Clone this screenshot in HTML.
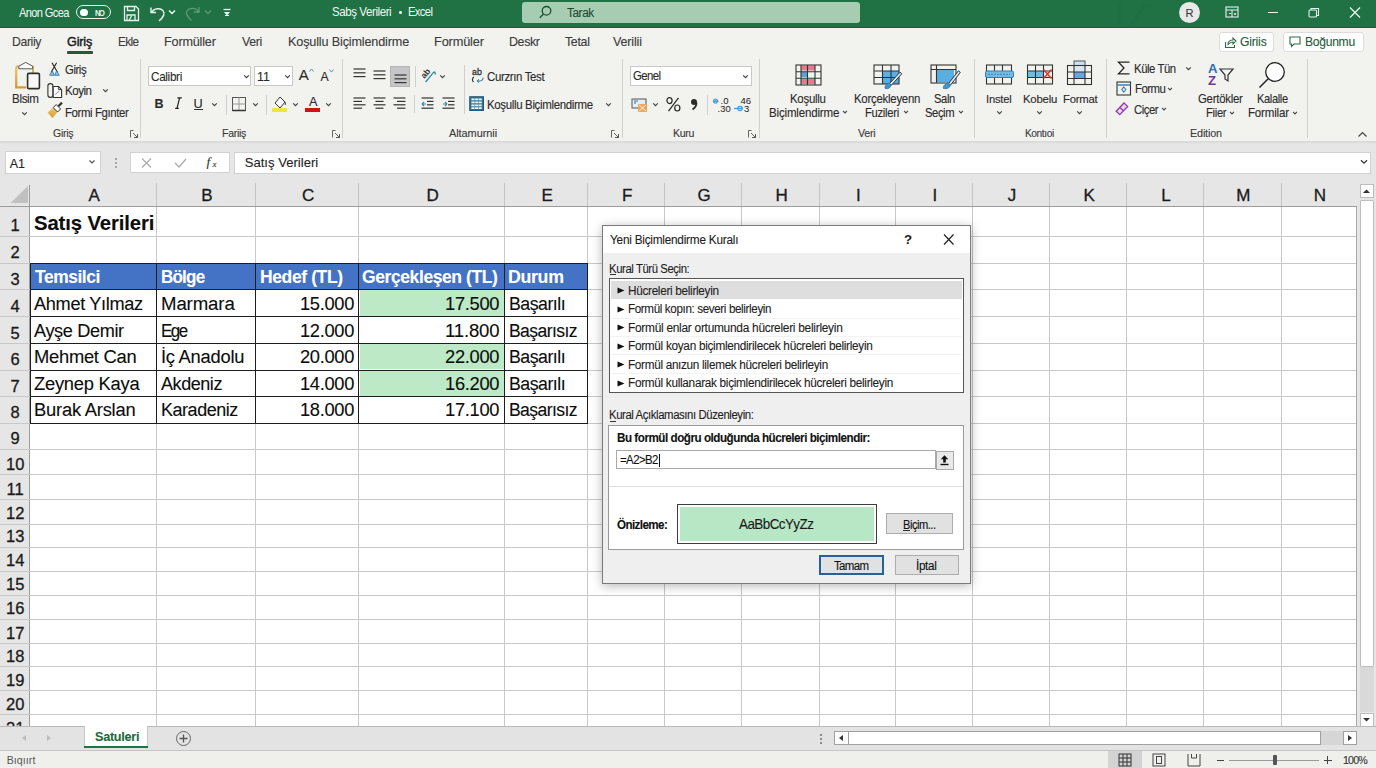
<!DOCTYPE html>
<html><head><meta charset="utf-8">
<style>
*{margin:0;padding:0;box-sizing:border-box}
html,body{width:1376px;height:768px;overflow:hidden;background:#fff;font-family:"Liberation Sans",sans-serif;color:#262626;position:relative}
.a{position:absolute}
.t{position:absolute;white-space:nowrap;line-height:1;-webkit-text-stroke:0.12px currentColor}
.ns{-webkit-text-stroke:0}
svg{overflow:visible}
</style></head><body>
<div class="a" style="left:0;top:0;width:1376px;height:28px;background:#207245"></div>
<div class="a" style="left:0;top:27px;width:1376px;height:1px;background:#1a5f39"></div>
<div class="t ns" style="left:19.2px;top:7.0px;font-size:12.2px;letter-spacing:-0.69px;transform:scaleX(0.910);transform-origin:0 0;color:#f4f8f5;">Anon Gcea</div>
<div class="a" style="left:76px;top:5px;width:35px;height:14px;border:1.3px solid #e9f2ec;border-radius:8px"></div>
<div class="a" style="left:80px;top:8.5px;width:7.5px;height:7.5px;border-radius:50%;background:#fff"></div>
<div class="t ns" style="left:95.0px;top:9.0px;font-size:8.5px;font-weight:700;letter-spacing:-1.49px;transform:scaleX(0.884);transform-origin:0 0;color:#eaf3ed;">NO</div>
<svg class="a" style="left:122px;top:4px" width="19" height="19" viewBox="0 0 19 19" fill="none" stroke="#e8f1eb" stroke-width="1.3">
<path d="M2.5 2.5h11.5l2.5 2.5v11.5h-14z"/><path d="M5.5 2.5v4h7v-4"/><path d="M5 16.5v-5.5h8v5.5"/><path d="M7 16.5l2.5-4.5"/></svg>
<svg class="a" style="left:148px;top:4px" width="20" height="19" viewBox="0 0 20 19" fill="none" stroke="#eef5f0" stroke-width="1.4">
<path d="M3 3.5v5h5"/><path d="M3.5 8.5C6 4 13 3.5 15.5 7.5c2 3.2-0.5 6-4.5 9.5"/></svg>
<svg class="a" style="left:168px;top:9px" width="8" height="6" viewBox="0 0 8 6"><path d="M1 1.5L4 4.5L7 1.5" fill="none" stroke="#eef5f0" stroke-width="1.5"/></svg>
<svg class="a" style="left:183px;top:4px" width="20" height="19" viewBox="0 0 20 19" fill="none" stroke="#5e9c78" stroke-width="1.3">
<path d="M16 3v5h-5"/><path d="M16 8C13.5 3.5 6.5 3 4 7c-2 3.2 0.5 6 4.5 9.5"/></svg>
<svg class="a" style="left:204px;top:9px" width="8" height="6" viewBox="0 0 8 6"><path d="M1 1.5L4 4.5L7 1.5" fill="none" stroke="#5e9c78" stroke-width="1.2"/></svg>
<svg class="a" style="left:222px;top:8px" width="10" height="10" viewBox="0 0 10 10"><path d="M1.5 1.5h7" stroke="#eef5f0" stroke-width="1.3"/><path d="M2 4h6l-3 3.5z" fill="#eef5f0"/><path d="M3 7.5h4" stroke="#eef5f0" stroke-width="1"/></svg>
<div class="t ns" style="left:332.0px;top:6.0px;font-size:12.5px;letter-spacing:-0.46px;transform:scaleX(0.922);transform-origin:0 0;color:#f2f7f3;">Sabş Verileri</div>
<div class="a" style="left:399px;top:11px;width:2.5px;height:2.5px;border-radius:50%;background:#e6efe9"></div>
<div class="t ns" style="left:408.0px;top:6.0px;font-size:12.5px;letter-spacing:-0.74px;transform:scaleX(0.904);transform-origin:0 0;color:#f2f7f3;">Excel</div>
<div class="a" style="left:522px;top:1.5px;width:338px;height:21.5px;background:#a6ccb2;border-radius:3px"></div>
<svg class="a" style="left:537px;top:4px" width="16" height="16" viewBox="0 0 16 16" fill="none" stroke="#1e4d33" stroke-width="1.3"><circle cx="9.5" cy="6.8" r="4.3"/><path d="M6.5 10L2.8 13.8"/></svg>
<div class="t " style="left:566.6px;top:7.0px;font-size:12.5px;letter-spacing:-0.44px;transform:scaleX(0.943);transform-origin:0 0;color:#1d4a31;">Tarak</div>
<div class="a" style="left:1117px;top:2px;width:4px;height:23px;background:#1d6a40;opacity:.35"></div>
<svg class="a" style="left:1130px;top:2px" width="30" height="24"><path d="M2 23L14 4h10" fill="none" stroke="#1d6a40" stroke-width="3" opacity=".35"/></svg>
<div class="a" style="left:1179px;top:2px;width:21px;height:21px;border-radius:50%;background:#e9e9e9"></div>
<div class="t " style="left:1185.5px;top:8.0px;font-size:11.1px;color:#3a3a3a;">R</div>
<svg class="a" style="left:1225px;top:6px" width="14" height="12" viewBox="0 0 14 12" fill="none" stroke="#e8f1eb" stroke-width="1.1"><rect x="1" y="1" width="12" height="10"/><path d="M1 4h12M7 4v7M4 7.5h2M9 7.5l1 1l1-1"/></svg>
<div class="a" style="left:1268px;top:12px;width:10px;height:1.2px;background:#eef5f0"></div>
<svg class="a" style="left:1308px;top:7px" width="12" height="11" viewBox="0 0 12 11" fill="none" stroke="#e8f1eb" stroke-width="1.1"><rect x="1" y="3" width="7.5" height="7" rx="1"/><path d="M3 3V1.5h7.5v7H8.5"/></svg>
<svg class="a" style="left:1349px;top:7px" width="12" height="11" viewBox="0 0 12 11" fill="none" stroke="#eef5f0" stroke-width="1.2"><path d="M1 0.5l10 10M11 0.5l-10 10"/></svg>
<div class="a" style="left:0;top:28px;width:1376px;height:113px;background:#f2f2ef"></div>
<div class="t " style="left:11.9px;top:35.0px;font-size:13.0px;letter-spacing:-0.39px;transform:scaleX(0.941);transform-origin:0 0;color:#3b3b3b;">Dariiy</div>
<div class="t " style="left:67.0px;top:35.0px;font-size:13.0px;letter-spacing:-0.19px;transform:scaleX(0.972);transform-origin:0 0;color:#1b1b1b;-webkit-text-stroke:0.45px #1b1b1b;">Giriş</div>
<div class="t " style="left:117.7px;top:35.0px;font-size:13.0px;letter-spacing:-0.73px;transform:scaleX(0.913);transform-origin:0 0;color:#3b3b3b;">Ekle</div>
<div class="t " style="left:164.4px;top:35.0px;font-size:13.0px;letter-spacing:-0.19px;transform:scaleX(0.972);transform-origin:0 0;color:#3b3b3b;">Formüller</div>
<div class="t " style="left:241.9px;top:35.0px;font-size:13.0px;letter-spacing:-0.36px;transform:scaleX(0.952);transform-origin:0 0;color:#3b3b3b;">Veri</div>
<div class="t " style="left:287.7px;top:35.0px;font-size:13.0px;letter-spacing:-0.17px;transform:scaleX(0.974);transform-origin:0 0;color:#3b3b3b;">Koşullu Biçimlendirme</div>
<div class="t " style="left:434.0px;top:35.0px;font-size:13.0px;letter-spacing:-0.15px;transform:scaleX(0.980);transform-origin:0 0;color:#3b3b3b;">Formüler</div>
<div class="t " style="left:509.3px;top:35.0px;font-size:13.0px;letter-spacing:-0.38px;transform:scaleX(0.955);transform-origin:0 0;color:#3b3b3b;">Deskr</div>
<div class="t " style="left:564.5px;top:35.0px;font-size:13.0px;letter-spacing:-0.33px;transform:scaleX(0.952);transform-origin:0 0;color:#3b3b3b;">Tetal</div>
<div class="t " style="left:613.4px;top:35.0px;font-size:13.0px;letter-spacing:-0.18px;transform:scaleX(0.966);transform-origin:0 0;color:#3b3b3b;">Verilii</div>
<div class="a" style="left:66.8px;top:51px;width:26px;height:2.6px;background:#1c5c36;border-radius:1px"></div>
<div class="a" style="left:1218.7px;top:31.8px;width:55.5px;height:20px;background:#fff;border:1px solid #dcdcdc;border-radius:3px"></div>
<svg class="a" style="left:1224px;top:36px" width="13" height="13" viewBox="0 0 13 13" fill="none" stroke="#2c6a45" stroke-width="1.1"><path d="M1.5 6v5.5h9V9"/><path d="M4 8.5c0-3 2-4.5 5-4.5V2l3 3l-3 3V6c-2 0-3.5 .8-5 2.5z"/></svg>
<div class="t " style="left:1240.0px;top:36.0px;font-size:12.5px;letter-spacing:-0.18px;transform:scaleX(0.968);transform-origin:0 0;color:#285c3d;">Giriis</div>
<div class="a" style="left:1283px;top:31.8px;width:81px;height:20px;background:#fff;border:1px solid #dcdcdc;border-radius:3px"></div>
<svg class="a" style="left:1289px;top:36px" width="12" height="12" viewBox="0 0 12 12" fill="none" stroke="#2c6a45" stroke-width="1.1"><path d="M1 1h10v7H5l-2.5 2.5V8H1z"/></svg>
<div class="t " style="left:1305.3px;top:36.0px;font-size:12.5px;letter-spacing:-0.29px;transform:scaleX(0.968);transform-origin:0 0;color:#285c3d;">Boğunmu</div>
<svg class="a" style="left:8px;top:58px" width="60" height="62" viewBox="8 58 60 62">
<defs><linearGradient id="gold" x1="0" y1="0" x2="0" y2="1"><stop offset="0" stop-color="#f2c766"/><stop offset="1" stop-color="#d49a35"/></linearGradient></defs>
<path d="M16.2 66.5V87.4H26" fill="none" stroke="url(#gold)" stroke-width="2.3"/>
<path d="M16.2 66.5H19M30 66.5H33V73" fill="none" stroke="#dcae55" stroke-width="2"/>
<path d="M18.8 68.8V66.2L25.8 62.4L32.6 66.2V68.8z" fill="#fbfbfb" stroke="#5a5a5a" stroke-width="1"/>
<rect x="27.6" y="73.4" width="11.8" height="15.2" rx="1.2" fill="#f8f8f8" stroke="#2e2e2e" stroke-width="1.6"/>
<path d="M52 62.8L57.6 72.6M56.6 62.8L51 72.6" stroke="#222" stroke-width="1.1"/>
<path d="M49.7 75.3L52.3 70.8L54.3 75.3z" fill="#8cc2e6" stroke="#3b7db0" stroke-width=".9"/>
<path d="M54.7 75.3L56.7 70.8L59.3 75.3z" fill="#8cc2e6" stroke="#3b7db0" stroke-width=".9"/>
<rect x="47.9" y="83.6" width="5" height="13.8" rx="2.3" fill="none" stroke="#333" stroke-width="1.1"/>
<path d="M53.2 86.5H58.6L61.6 89.6V97.5H53.2z" fill="#fafafa" stroke="#333" stroke-width="1.1"/>
<path d="M58.6 86.5V89.6H61.6" fill="none" stroke="#333" stroke-width=".9"/>
<path d="M55.2 94.5L59.5 91" stroke="#777" stroke-width=".8"/>
<path d="M47.6 112.6L53.2 107.6L57.6 112L52.4 117.9z" fill="url(#gold)"/>
<path d="M53.2 107.6L56.2 104.6L60.6 109L57.6 112z" fill="#fff" stroke="#333" stroke-width="1"/>
<path d="M58.4 106.2L62 102.6" stroke="#333" stroke-width="2.2"/>
</svg>
<div class="t " style="left:11.7px;top:93.0px;font-size:12.2px;letter-spacing:-0.36px;transform:scaleX(0.952);transform-origin:0 0;color:#2b2b2b;">Blsim</div>
<svg class="a" style="left:21.1px;top:109.5px" width="7" height="7" viewBox="0 0 7 7"><path d="M1.2 2.3L3.5 4.6L5.8 2.3" fill="none" stroke="#444" stroke-width="1.2"/></svg>
<div class="t " style="left:64.5px;top:64.0px;font-size:12.3px;letter-spacing:-0.47px;transform:scaleX(0.926);transform-origin:0 0;color:#2b2b2b;">Giriş</div>
<div class="t " style="left:65.0px;top:85.0px;font-size:12.3px;letter-spacing:-0.49px;transform:scaleX(0.936);transform-origin:0 0;color:#2b2b2b;">Koyin</div>
<svg class="a" style="left:101.5px;top:87.0px" width="7" height="7" viewBox="0 0 7 7"><path d="M1.2 2.3L3.5 4.6L5.8 2.3" fill="none" stroke="#444" stroke-width="1.2"/></svg>
<div class="t " style="left:64.5px;top:107.0px;font-size:12.3px;letter-spacing:-0.43px;transform:scaleX(0.931);transform-origin:0 0;color:#2b2b2b;">Formi Fgınter</div>
<div class="t " style="left:52.8px;top:128.0px;font-size:11.1px;letter-spacing:-0.30px;transform:scaleX(0.948);transform-origin:0 0;color:#3a3a3a;">Giriş</div>
<svg class="a" style="left:130px;top:130px" width="8" height="8" viewBox="0 0 8 8" fill="none" stroke="#555" stroke-width="0.9"><path d="M0.5 7.5V0.5h3M7.5 4.5v3h-3"/><path d="M3 3l4.5 4.5M4 7.5h3.5V4"/></svg>
<div class="a" style="left:140px;top:59px;width:1px;height:79px;background:#cfcfcf"></div>
<div class="a" style="left:148.2px;top:66.2px;width:103.3px;height:20.1px;background:#fff;border:1px solid #c9c9c9"></div>
<div class="t " style="left:151.2px;top:71.0px;font-size:12.4px;letter-spacing:-0.33px;transform:scaleX(0.944);transform-origin:0 0;color:#2b2b2b;">Calibri</div>
<svg class="a" style="left:243.1px;top:73.1px" width="7" height="7" viewBox="0 0 7 7"><path d="M1.2 2.3L3.5 4.6L5.8 2.3" fill="none" stroke="#444" stroke-width="1.2"/></svg>
<div class="a" style="left:253.6px;top:66.2px;width:39.9px;height:20.1px;background:#fff;border:1px solid #c9c9c9"></div>
<div class="t " style="left:257.0px;top:71.0px;font-size:12.4px;color:#2b2b2b;">11</div>
<svg class="a" style="left:284.3px;top:73.1px" width="7" height="7" viewBox="0 0 7 7"><path d="M1.2 2.3L3.5 4.6L5.8 2.3" fill="none" stroke="#444" stroke-width="1.2"/></svg>
<div class="t " style="left:298.7px;top:67.0px;font-size:15px;color:#2b2b2b;">A</div>
<svg class="a" style="left:309px;top:68px" width="5" height="4" viewBox="0 0 5 4"><path d="M0.5 3.5L2.5 1L4.5 3.5" fill="none" stroke="#4a8fc6" stroke-width="1"/></svg>
<div class="t " style="left:320.6px;top:71.0px;font-size:12.2px;color:#2b2b2b;">A</div>
<svg class="a" style="left:329px;top:69px" width="5" height="4" viewBox="0 0 5 4"><path d="M0.5 0.5L2.5 3L4.5 0.5" fill="none" stroke="#4a8fc6" stroke-width="1"/></svg>
<div class="t " style="left:154.4px;top:98.0px;font-size:12.5px;font-weight:700;color:#2b2b2b;">B</div>
<svg class="a" style="left:173px;top:96px" width="12" height="14" viewBox="173 96 12 14"><path d="M177.4 97.9h4.4M175.2 108.3h3.6M179.6 97.9L177 108.3" fill="none" stroke="#222" stroke-width="1.2"/></svg>
<div class="t " style="left:193.6px;top:98.0px;font-size:12.7px;color:#2b2b2b;">U</div>
<div class="a" style="left:193.5px;top:109.3px;width:9.5px;height:1px;background:#333"></div>
<svg class="a" style="left:211.0px;top:100.7px" width="7" height="7" viewBox="0 0 7 7"><path d="M1.2 2.3L3.5 4.6L5.8 2.3" fill="none" stroke="#444" stroke-width="1.2"/></svg>
<div class="a" style="left:225.7px;top:94.5px;width:1px;height:20.099999999999994px;background:#cfcfcf"></div>
<svg class="a" style="left:231px;top:96px" width="16" height="16" viewBox="0 0 16 16" fill="none" stroke="#555" stroke-width="1">
<rect x="1.5" y="1.5" width="13" height="13"/><path d="M8 1.5v13M1.5 8h13" stroke="#999"/><path d="M1.5 14.5h13" stroke="#333" stroke-width="1.5"/></svg>
<svg class="a" style="left:252.0px;top:100.7px" width="7" height="7" viewBox="0 0 7 7"><path d="M1.2 2.3L3.5 4.6L5.8 2.3" fill="none" stroke="#444" stroke-width="1.2"/></svg>
<div class="a" style="left:266.4px;top:94.5px;width:1px;height:20.099999999999994px;background:#cfcfcf"></div>
<svg class="a" style="left:271px;top:95px" width="17" height="18" viewBox="0 0 17 18">
<path d="M4 8l5-6l5 5l-5 6z" fill="#fafafa" stroke="#333" stroke-width="1"/><path d="M13 6c1.5 1.5 2 3 1 4" fill="none" stroke="#333" stroke-width="1"/>
<rect x="1" y="13" width="15" height="4" fill="#efe83a"/></svg>
<svg class="a" style="left:291.8px;top:100.7px" width="7" height="7" viewBox="0 0 7 7"><path d="M1.2 2.3L3.5 4.6L5.8 2.3" fill="none" stroke="#444" stroke-width="1.2"/></svg>
<div class="t " style="left:309.0px;top:96.0px;font-size:12.7px;color:#2b2b2b;">A</div>
<div class="a" style="left:305px;top:108px;width:15.3px;height:3.7px;background:#d1101a"></div>
<svg class="a" style="left:325.0px;top:100.7px" width="7" height="7" viewBox="0 0 7 7"><path d="M1.2 2.3L3.5 4.6L5.8 2.3" fill="none" stroke="#444" stroke-width="1.2"/></svg>
<div class="t " style="left:221.7px;top:128.0px;font-size:11.1px;letter-spacing:-0.29px;transform:scaleX(0.947);transform-origin:0 0;color:#3a3a3a;">Fariiş</div>
<svg class="a" style="left:331.5px;top:130px" width="8" height="8" viewBox="0 0 8 8" fill="none" stroke="#555" stroke-width="0.9"><path d="M0.5 7.5V0.5h3M7.5 4.5v3h-3"/><path d="M3 3l4.5 4.5M4 7.5h3.5V4"/></svg>
<div class="a" style="left:342px;top:59px;width:1px;height:79px;background:#cfcfcf"></div>
<svg class="a" style="left:353px;top:67.5px" width="16" height="14" viewBox="0 0 16 14"><path d="M0.5 1.0H12.5" stroke="#333" stroke-width="1.2"/><path d="M0.5 4.8H12.5" stroke="#333" stroke-width="1.2"/><path d="M0.5 8.6H12.5" stroke="#333" stroke-width="1.2"/></svg>
<svg class="a" style="left:373px;top:70px" width="16" height="14" viewBox="0 0 16 14"><path d="M0.5 1.0H12.5" stroke="#333" stroke-width="1.2"/><path d="M0.5 4.8H12.5" stroke="#333" stroke-width="1.2"/><path d="M0.5 8.6H12.5" stroke="#333" stroke-width="1.2"/></svg>
<div class="a" style="left:390px;top:66.3px;width:20px;height:20.3px;background:#c6c6c6;border:1px solid #b5b5b5"></div>
<svg class="a" style="left:394px;top:74px" width="16" height="14" viewBox="0 0 16 14"><path d="M0.5 1.0H12.5" stroke="#333" stroke-width="1.2"/><path d="M0.5 4.8H12.5" stroke="#333" stroke-width="1.2"/><path d="M0.5 8.6H12.5" stroke="#333" stroke-width="1.2"/></svg>
<div class="a" style="left:414.5px;top:66px;width:1px;height:21px;background:#cfcfcf"></div>
<svg class="a" style="left:415px;top:62px" width="25" height="25" viewBox="415 62 25 25">
<text x="0" y="0" font-size="8.5" font-weight="700" font-family="Liberation Sans" fill="#333" transform="translate(424.5 79) rotate(-50)">ab</text>
<path d="M425.6 82L433.3 72.6Q435.6 70.8 435.2 74.6" fill="none" stroke="#2e8a9e" stroke-width="1.3"/></svg>
<svg class="a" style="left:438.5px;top:72.7px" width="7" height="7" viewBox="0 0 7 7"><path d="M1.2 2.3L3.5 4.6L5.8 2.3" fill="none" stroke="#444" stroke-width="1.2"/></svg>
<div class="a" style="left:463.6px;top:65px;width:1px;height:49px;background:#cfcfcf"></div>
<svg class="a" style="left:468px;top:64px" width="20" height="22" viewBox="468 64 20 22">
<text x="472" y="75.3" font-size="8.8" font-family="Liberation Sans" fill="#333" stroke="#333" stroke-width=".3">ab</text>
<path d="M473.8 77C472.2 78.5 471.8 80.5 473.5 82" fill="none" stroke="#333" stroke-width="1.1"/>
<path d="M483 77.6C483.5 80 481 81.5 477.5 81" fill="none" stroke="#2e7fa8" stroke-width="1.1"/><path d="M478.8 79.2L477 81L479 82.6" fill="none" stroke="#2e7fa8" stroke-width="1"/></svg>
<div class="t " style="left:487.4px;top:71.0px;font-size:12.2px;letter-spacing:-0.37px;transform:scaleX(0.938);transform-origin:0 0;color:#2b2b2b;">Curzrın Test</div>
<svg class="a" style="left:353px;top:97px" width="16" height="14" viewBox="0 0 16 14"><path d="M0.5 1.0H12.5" stroke="#333" stroke-width="1.2"/><path d="M0.5 4.4H9" stroke="#333" stroke-width="1.2"/><path d="M0.5 7.8H12.5" stroke="#333" stroke-width="1.2"/><path d="M0.5 11.2H9" stroke="#333" stroke-width="1.2"/></svg>
<svg class="a" style="left:373px;top:97px" width="16" height="14" viewBox="0 0 16 14"><path d="M0.5 1.0H12.5" stroke="#333" stroke-width="1.2"/><path d="M2.5 4.4H10.5" stroke="#333" stroke-width="1.2"/><path d="M0.5 7.8H12.5" stroke="#333" stroke-width="1.2"/><path d="M2.5 11.2H10.5" stroke="#333" stroke-width="1.2"/></svg>
<svg class="a" style="left:393px;top:97px" width="16" height="14" viewBox="0 0 16 14"><path d="M0.5 1.0H12.5" stroke="#333" stroke-width="1.2"/><path d="M4 4.4H12.5" stroke="#333" stroke-width="1.2"/><path d="M0.5 7.8H12.5" stroke="#333" stroke-width="1.2"/><path d="M4 11.2H12.5" stroke="#333" stroke-width="1.2"/></svg>
<div class="a" style="left:414px;top:95px;width:1px;height:18px;background:#cfcfcf"></div>
<svg class="a" style="left:421px;top:97px" width="16" height="14" viewBox="0 0 16 14"><path d="M0.5 1.0H12.5" stroke="#333" stroke-width="1.2"/><path d="M6 4.4H12.5" stroke="#333" stroke-width="1.2"/><path d="M6 7.8H12.5" stroke="#333" stroke-width="1.2"/><path d="M0.5 11.2H12.5" stroke="#333" stroke-width="1.2"/></svg>
<svg class="a" style="left:421px;top:101px" width="6" height="6"><path d="M5 3H1M1 3l2-2M1 3l2 2" fill="none" stroke="#2f8fb0" stroke-width="1.2"/></svg>
<svg class="a" style="left:442px;top:97px" width="16" height="14" viewBox="0 0 16 14"><path d="M0.5 1.0H12.5" stroke="#333" stroke-width="1.2"/><path d="M6 4.4H12.5" stroke="#333" stroke-width="1.2"/><path d="M6 7.8H12.5" stroke="#333" stroke-width="1.2"/><path d="M0.5 11.2H12.5" stroke="#333" stroke-width="1.2"/></svg>
<svg class="a" style="left:442px;top:101px" width="6" height="6"><path d="M1 3h4M5 3L3 1M5 3L3 5" fill="none" stroke="#2f8fb0" stroke-width="1.2"/></svg>
<svg class="a" style="left:469px;top:96px" width="15" height="15" viewBox="0 0 15 15">
<rect x="0.8" y="0.8" width="13.6" height="13.6" fill="#3a7898" stroke="#24597a" stroke-width="1.2"/>
<path d="M2.4 3.4h10.4M2.4 6.4h10.4M2.4 9.4h10.4M2.4 12.1h10.4" stroke="#e6f3f9" stroke-width="1.7" stroke-dasharray="3.2 .5"/></svg>
<div class="t " style="left:487.4px;top:99.0px;font-size:12.2px;letter-spacing:-0.36px;transform:scaleX(0.941);transform-origin:0 0;color:#2b2b2b;">Koşullu Biçimlendirme</div>
<svg class="a" style="left:604.5px;top:101.1px" width="7" height="7" viewBox="0 0 7 7"><path d="M1.2 2.3L3.5 4.6L5.8 2.3" fill="none" stroke="#444" stroke-width="1.2"/></svg>
<div class="t " style="left:449.3px;top:128.0px;font-size:11.1px;letter-spacing:-0.07px;transform:scaleX(0.987);transform-origin:0 0;color:#3a3a3a;">Altamurnii</div>
<svg class="a" style="left:611px;top:130px" width="8" height="8" viewBox="0 0 8 8" fill="none" stroke="#555" stroke-width="0.9"><path d="M0.5 7.5V0.5h3M7.5 4.5v3h-3"/><path d="M3 3l4.5 4.5M4 7.5h3.5V4"/></svg>
<div class="a" style="left:622px;top:59px;width:1px;height:79px;background:#cfcfcf"></div>
<div class="a" style="left:630px;top:66.1px;width:121.6px;height:20.4px;background:#fff;border:1px solid #c9c9c9"></div>
<div class="t " style="left:633.0px;top:70.0px;font-size:12.4px;letter-spacing:-0.66px;transform:scaleX(0.920);transform-origin:0 0;color:#2b2b2b;">Genel</div>
<svg class="a" style="left:742.3px;top:72.5px" width="7" height="7" viewBox="0 0 7 7"><path d="M1.2 2.3L3.5 4.6L5.8 2.3" fill="none" stroke="#444" stroke-width="1.2"/></svg>
<svg class="a" style="left:631px;top:98px" width="18" height="15" viewBox="0 0 18 15">
<rect x="1" y="1" width="14" height="9" fill="#e6eef5" stroke="#555" stroke-width="1"/><path d="M3 3h4M3 5h2" stroke="#2f6f9f"/>
<rect x="7" y="6" width="9" height="8" fill="#f0a050" opacity=".9"/><path d="M8 7l7 6M15 7l-7 6" stroke="#fff" stroke-width=".8"/></svg>
<svg class="a" style="left:652.2px;top:101.0px" width="7" height="7" viewBox="0 0 7 7"><path d="M1.2 2.3L3.5 4.6L5.8 2.3" fill="none" stroke="#444" stroke-width="1.2"/></svg>
<svg class="a" style="left:666px;top:97px" width="15" height="15" viewBox="0 0 15 15" fill="none" stroke="#262626" stroke-width="1.2"><ellipse cx="3.5" cy="3.6" rx="2.6" ry="3"/><ellipse cx="11.3" cy="11" rx="2.6" ry="3"/><path d="M12.5 0.8L2.5 14.2"/></svg>
<svg class="a" style="left:689px;top:98px" width="10" height="13" viewBox="0 0 10 13"><circle cx="5" cy="4" r="3" fill="#2b2b2b"/><path d="M7.5 4.5c0 3-1.5 5.5-4 7" fill="none" stroke="#2b2b2b" stroke-width="1.8"/></svg>
<div class="a" style="left:707.4px;top:95px;width:1px;height:20px;background:#cfcfcf"></div>
<svg class="a" style="left:712px;top:96px" width="18" height="17" viewBox="0 0 18 17">
<text x="8.5" y="8.3" font-size="9.5" font-family="Liberation Sans" fill="#222">.0</text><text x="5.5" y="15.8" font-size="9.5" font-family="Liberation Sans" fill="#222">.30</text>
<path d="M1.5 5.2h5" stroke="#4a9ad6" stroke-width="1.6"/><circle cx="3.5" cy="5.2" r="2" fill="none" stroke="#4a9ad6" stroke-width="1.2"/></svg>
<svg class="a" style="left:733px;top:96px" width="18" height="17" viewBox="0 0 18 17">
<text x="7.5" y="8.3" font-size="9.5" font-family="Liberation Sans" fill="#222">46</text><text x="11" y="15.8" font-size="9.5" font-family="Liberation Sans" fill="#222">3</text>
<path d="M1 12.5h9" stroke="#4a9ad6" stroke-width="1.3"/><circle cx="7" cy="12.5" r="2.2" fill="none" stroke="#4a9ad6" stroke-width="1.2"/></svg>
<div class="t " style="left:672.6px;top:128.0px;font-size:11.1px;letter-spacing:-0.34px;transform:scaleX(0.956);transform-origin:0 0;color:#3a3a3a;">Kuru</div>
<svg class="a" style="left:748px;top:130px" width="8" height="8" viewBox="0 0 8 8" fill="none" stroke="#555" stroke-width="0.9"><path d="M0.5 7.5V0.5h3M7.5 4.5v3h-3"/><path d="M3 3l4.5 4.5M4 7.5h3.5V4"/></svg>
<div class="a" style="left:759.2px;top:59px;width:1px;height:79px;background:#cfcfcf"></div>
<svg class="a" style="left:795px;top:64px" width="27" height="22" viewBox="0 0 27 22"><rect x="6" y="1.5" width="14" height="5" fill="#e47a8c"/><rect x="6" y="15" width="14" height="5" fill="#e47a8c"/><rect x="6" y="8" width="6" height="5" fill="#5d9fd6"/><g fill="none" stroke="#333" stroke-width="1.1"><rect x="1" y="1" width="25" height="20"/><path d="M1 7.7h25M1 14.3h25M6 1v20M12.5 1v20M20 1v20"/></g></svg>
<div class="t " style="left:790.0px;top:94.0px;font-size:11.9px;letter-spacing:-0.26px;transform:scaleX(0.961);transform-origin:0 0;color:#2b2b2b;">Koşullu</div>
<div class="t " style="left:769.0px;top:108.0px;font-size:11.9px;letter-spacing:-0.18px;transform:scaleX(0.971);transform-origin:0 0;color:#2b2b2b;">Biçimlendirme</div>
<svg class="a" style="left:842.3px;top:109.3px" width="6" height="6" viewBox="0 0 7 7"><path d="M1.2 2.3L3.5 4.6L5.8 2.3" fill="none" stroke="#444" stroke-width="1.2"/></svg>
<svg class="a" style="left:873px;top:64px" width="30" height="25" viewBox="0 0 30 25"><rect x="10" y="7" width="16" height="13" fill="#5aaee0"/><g fill="none" stroke="#333" stroke-width="1.1"><rect x="1" y="1" width="25" height="19"/><path d="M1 7h25M1 13.5h25M9.5 1v19M18 1v19"/></g><path d="M16.5 19.5L27 8.2l1.8 1.6L18.4 21.2z" fill="#d7ebf7" stroke="#333" stroke-width="1"/><path d="M12.2 24.5c-.8-1.6.6-4.6 3.8-5.6l2.2 2c-.8 3-2.5 4.2-6 3.6z" fill="#3d95d0" stroke="#2a6f9e" stroke-width=".7"/></svg>
<div class="t " style="left:853.7px;top:94.0px;font-size:11.9px;letter-spacing:-0.26px;transform:scaleX(0.960);transform-origin:0 0;color:#2b2b2b;">Korçekleyenn</div>
<div class="t " style="left:865.4px;top:108.0px;font-size:11.9px;letter-spacing:-0.31px;transform:scaleX(0.944);transform-origin:0 0;color:#2b2b2b;">Fuzileri</div>
<svg class="a" style="left:903.3px;top:109.3px" width="6" height="6" viewBox="0 0 7 7"><path d="M1.2 2.3L3.5 4.6L5.8 2.3" fill="none" stroke="#444" stroke-width="1.2"/></svg>
<svg class="a" style="left:930px;top:64px" width="31" height="25" viewBox="0 0 31 25"><rect x="7" y="6" width="17" height="12" fill="#5aaee0"/><g fill="none" stroke="#333" stroke-width="1.1"><rect x="1" y="1" width="25" height="18"/><path d="M1 5.5h25M6.5 1v18"/></g><path d="M18.5 19.5L28.5 6.8l1.8 1.6L20.4 21.2z" fill="#d7ebf7" stroke="#333" stroke-width="1"/><path d="M13.5 24.5c-.8-1.6.6-4.6 4.8-5.6l2.2 2c-.8 3-3 4.2-7 3.6z" fill="#3d95d0" stroke="#2a6f9e" stroke-width=".7"/></svg>
<div class="t " style="left:933.6px;top:94.0px;font-size:11.9px;letter-spacing:-0.45px;transform:scaleX(0.944);transform-origin:0 0;color:#2b2b2b;">Saln</div>
<div class="t " style="left:924.7px;top:108.0px;font-size:11.9px;letter-spacing:-0.45px;transform:scaleX(0.946);transform-origin:0 0;color:#2b2b2b;">Seçim</div>
<svg class="a" style="left:957.7px;top:109.3px" width="6" height="6" viewBox="0 0 7 7"><path d="M1.2 2.3L3.5 4.6L5.8 2.3" fill="none" stroke="#444" stroke-width="1.2"/></svg>
<div class="t " style="left:857.8px;top:128.0px;font-size:11.1px;letter-spacing:-0.26px;transform:scaleX(0.960);transform-origin:0 0;color:#3a3a3a;">Veri</div>
<div class="a" style="left:973.7px;top:59px;width:1px;height:79px;background:#cfcfcf"></div>
<svg class="a" style="left:985px;top:64px" width="30" height="22" viewBox="0 0 30 22"><g fill="none" stroke="#333" stroke-width="1.1"><rect x="1.5" y="1" width="25" height="19"/><path d="M9.5 1v19M17.5 1v19"/></g><rect x="0.5" y="7" width="28" height="6.5" rx="1.5" fill="#6fbbe6" stroke="#2f7fb3" stroke-width="1"/><path d="M3 10.3h22" stroke="#2f7fb3" stroke-dasharray="2 1" stroke-width=".8"/></svg>
<div class="t " style="left:986.4px;top:93.0px;font-size:11.7px;letter-spacing:-0.23px;transform:scaleX(0.958);transform-origin:0 0;color:#2b2b2b;">Instel</div>
<svg class="a" style="left:996.0px;top:108.5px" width="7" height="7" viewBox="0 0 7 7"><path d="M1.2 2.3L3.5 4.6L5.8 2.3" fill="none" stroke="#444" stroke-width="1.2"/></svg>
<svg class="a" style="left:1026px;top:64px" width="28" height="22" viewBox="0 0 28 22"><rect x="2" y="7" width="15" height="6.5" fill="#6fbbe6"/><g fill="none" stroke="#333" stroke-width="1.1"><rect x="1.5" y="1" width="25" height="19"/><path d="M1.5 7h25M1.5 13.5h25M9.5 1v19M17.5 1v19"/></g><path d="M17.5 5.5l8 9M25.5 5.5l-8 9" stroke="#d8392b" stroke-width="1.5"/></svg>
<div class="t " style="left:1022.7px;top:93.0px;font-size:11.7px;letter-spacing:-0.21px;transform:scaleX(0.971);transform-origin:0 0;color:#2b2b2b;">Kobelu</div>
<svg class="a" style="left:1035.9px;top:108.5px" width="7" height="7" viewBox="0 0 7 7"><path d="M1.2 2.3L3.5 4.6L5.8 2.3" fill="none" stroke="#444" stroke-width="1.2"/></svg>
<svg class="a" style="left:1066px;top:60px" width="27" height="26" viewBox="0 0 27 26"><rect x="8" y="1" width="11" height="5" fill="#c5e3f3" stroke="#555" stroke-width="1"/><rect x="8" y="12" width="11" height="6" fill="#5aaee0"/><rect x="8" y="6" width="11" height="6" fill="#dbe7ee"/><g fill="none" stroke="#333" stroke-width="1.1"><rect x="1.5" y="5.5" width="24" height="19"/><path d="M1.5 12h24M1.5 18.5h24M8 5.5v19M19 5.5v19"/></g></svg>
<div class="t " style="left:1062.7px;top:93.0px;font-size:11.7px;letter-spacing:-0.24px;transform:scaleX(0.967);transform-origin:0 0;color:#2b2b2b;">Format</div>
<svg class="a" style="left:1075.8px;top:108.5px" width="7" height="7" viewBox="0 0 7 7"><path d="M1.2 2.3L3.5 4.6L5.8 2.3" fill="none" stroke="#444" stroke-width="1.2"/></svg>
<div class="t " style="left:1025.2px;top:128.0px;font-size:11.1px;letter-spacing:-0.47px;transform:scaleX(0.919);transform-origin:0 0;color:#3a3a3a;">Kontıoi</div>
<div class="a" style="left:1106.1px;top:59px;width:1px;height:79px;background:#cfcfcf"></div>
<svg class="a" style="left:1117px;top:61px" width="14" height="14" viewBox="0 0 14 14"><path d="M12.5 1.2H1.5l5.5 5.8l-5.5 5.8h11" fill="none" stroke="#262626" stroke-width="1.3"/></svg>
<div class="t " style="left:1134.0px;top:63.0px;font-size:12.2px;letter-spacing:-0.47px;transform:scaleX(0.932);transform-origin:0 0;color:#2b2b2b;">Küle Tün</div>
<svg class="a" style="left:1184.7px;top:65.1px" width="7" height="7" viewBox="0 0 7 7"><path d="M1.2 2.3L3.5 4.6L5.8 2.3" fill="none" stroke="#444" stroke-width="1.2"/></svg>
<svg class="a" style="left:1116px;top:81px" width="16" height="15" viewBox="0 0 16 15" fill="none" stroke="#333" stroke-width="1.1">
<rect x="1" y="1" width="13.5" height="13"/><path d="M1 4h13.5" stroke="#2f7fb3" stroke-width="1.4"/><path d="M7.8 6l2 2.5l-2 2.5l-2-2.5z" stroke="#2f7fb3"/></svg>
<div class="t " style="left:1134.5px;top:83.0px;font-size:12.2px;letter-spacing:-0.58px;transform:scaleX(0.934);transform-origin:0 0;color:#2b2b2b;">Formu</div>
<svg class="a" style="left:1167.2px;top:86.0px" width="6" height="6" viewBox="0 0 7 7"><path d="M1.2 2.3L3.5 4.6L5.8 2.3" fill="none" stroke="#444" stroke-width="1.2"/></svg>
<svg class="a" style="left:1115px;top:101px" width="16" height="15" viewBox="0 0 16 15" fill="none" stroke="#8e3aa6" stroke-width="1.3">
<path d="M1.2 10.2l7.8-8.2l3.6 3.4l-7.8 8.2z" fill="#e9d6f0"/><path d="M4.8 6.4l3.6 3.4" /></svg>
<div class="t " style="left:1134.0px;top:104.0px;font-size:12.2px;letter-spacing:-0.51px;transform:scaleX(0.929);transform-origin:0 0;color:#2b2b2b;">Ciçer</div>
<svg class="a" style="left:1161.2px;top:106.0px" width="6" height="6" viewBox="0 0 7 7"><path d="M1.2 2.3L3.5 4.6L5.8 2.3" fill="none" stroke="#444" stroke-width="1.2"/></svg>
<div class="t ns" style="left:1208.0px;top:62.0px;font-size:13.2px;font-weight:700;color:#2f6fb3;">A</div>
<div class="t ns" style="left:1208.0px;top:74.0px;font-size:13.2px;font-weight:700;color:#6f3a96;">Z</div>
<svg class="a" style="left:1219px;top:68px" width="15" height="14" viewBox="0 0 15 14"><path d="M1 1h13l-5 6v6l-3-2V7z" fill="none" stroke="#333" stroke-width="1.2"/></svg>
<div class="t " style="left:1197.9px;top:94.0px;font-size:11.9px;letter-spacing:-0.26px;transform:scaleX(0.958);transform-origin:0 0;color:#2b2b2b;">Gertökler</div>
<div class="t " style="left:1205.9px;top:108.0px;font-size:11.9px;letter-spacing:-0.33px;transform:scaleX(0.942);transform-origin:0 0;color:#2b2b2b;">Fiier</div>
<svg class="a" style="left:1229.4px;top:110.0px" width="6" height="6" viewBox="0 0 7 7"><path d="M1.2 2.3L3.5 4.6L5.8 2.3" fill="none" stroke="#444" stroke-width="1.2"/></svg>
<svg class="a" style="left:1258px;top:61px" width="29" height="28" viewBox="0 0 29 28"><circle cx="17" cy="11" r="9.3" fill="#fff" stroke="#222" stroke-width="1.3"/><path d="M10.2 17.8L1.5 26.5" stroke="#222" stroke-width="1.5"/></svg>
<div class="t " style="left:1257.4px;top:94.0px;font-size:11.9px;letter-spacing:-0.40px;transform:scaleX(0.933);transform-origin:0 0;color:#2b2b2b;">Kalalle</div>
<div class="t " style="left:1248.0px;top:108.0px;font-size:11.9px;letter-spacing:-0.19px;transform:scaleX(0.970);transform-origin:0 0;color:#2b2b2b;">Formilar</div>
<svg class="a" style="left:1291.5px;top:110.0px" width="6" height="6" viewBox="0 0 7 7"><path d="M1.2 2.3L3.5 4.6L5.8 2.3" fill="none" stroke="#444" stroke-width="1.2"/></svg>
<div class="t " style="left:1190.3px;top:128.0px;font-size:11.1px;letter-spacing:-0.16px;transform:scaleX(0.972);transform-origin:0 0;color:#3a3a3a;">Edition</div>
<div class="a" style="left:1306.6px;top:59px;width:1px;height:79px;background:#cfcfcf"></div>
<svg class="a" style="left:1357px;top:131px" width="11" height="7" viewBox="0 0 11 7"><path d="M1.5 5.5L5.5 1.5L9.5 5.5" fill="none" stroke="#444" stroke-width="1.2"/></svg>
<div class="a" style="left:0;top:141px;width:1376px;height:42px;background:#e6e6e6"></div>
<div class="a" style="left:0;top:141px;width:1376px;height:3px;background:linear-gradient(#d6d6d6,#e6e6e6)"></div>
<div class="a" style="left:4.7px;top:151px;width:96.5px;height:22.5px;background:#fff;border:1px solid #d2d2d2"></div>
<div class="t " style="left:9.7px;top:158.0px;font-size:12.5px;color:#262626;">A1</div>
<svg class="a" style="left:88px;top:159px" width="8" height="6" viewBox="0 0 8 6"><path d="M1.5 1.5L4 4L6.5 1.5" fill="none" stroke="#555" stroke-width="1.2"/></svg>
<div class="a" style="left:115px;top:158px;width:1.6px;height:1.6px;background:#9a9a9a;border-radius:50%"></div>
<div class="a" style="left:115px;top:162px;width:1.6px;height:1.6px;background:#9a9a9a;border-radius:50%"></div>
<div class="a" style="left:115px;top:166px;width:1.6px;height:1.6px;background:#9a9a9a;border-radius:50%"></div>
<div class="a" style="left:129.5px;top:151.9px;width:100.7px;height:21.2px;background:#fff;border:1px solid #d2d2d2"></div>
<svg class="a" style="left:141px;top:158px" width="11" height="10" viewBox="0 0 11 10"><path d="M1 0.5l9 9M10 0.5l-9 9" stroke="#a8a8a8" stroke-width="1.1"/></svg>
<svg class="a" style="left:174px;top:158px" width="13" height="10" viewBox="0 0 13 10"><path d="M1 5l4 4l7-8" fill="none" stroke="#a8a8a8" stroke-width="1.2"/></svg>
<div class="t" style="left:206.5px;top:154.5px;font-size:13.5px;font-family:'Liberation Serif',serif;font-style:italic;color:#333">f</div>
<div class="t" style="left:212.5px;top:159.5px;font-size:9px;font-family:'Liberation Serif',serif;font-style:italic;color:#333">x</div>
<div class="a" style="left:233.7px;top:151.6px;width:1137.7px;height:22.2px;background:#fff;border:1px solid #d2d2d2"></div>
<div class="t " style="left:244.7px;top:156.0px;font-size:13.1px;color:#262626;">Satış Verileri</div>
<svg class="a" style="left:1360px;top:159px" width="8" height="6" viewBox="0 0 8 6"><path d="M1 1.2L4 4.2L7 1.2" fill="none" stroke="#333" stroke-width="1.3"/></svg>
<div class="a" style="left:0;top:183px;width:1357px;height:23.5px;background:#e6e6e6"></div>
<svg class="a" style="left:9px;top:185px" width="20" height="19" viewBox="0 0 20 19"><path d="M19 1V18H1.5z" fill="#c0c0c0"/></svg>
<div class="t " style="left:88.5px;top:187.0px;font-size:17px;color:#1a1a1a;-webkit-text-stroke:0.3px #1a1a1a;">A</div>
<div class="a" style="left:156px;top:183px;width:1px;height:23px;background:#c4c4c4"></div>
<div class="t " style="left:201.3px;top:187.0px;font-size:17px;color:#1a1a1a;-webkit-text-stroke:0.3px #1a1a1a;">B</div>
<div class="a" style="left:255px;top:183px;width:1px;height:23px;background:#c4c4c4"></div>
<div class="t " style="left:301.9px;top:187.0px;font-size:17px;color:#1a1a1a;-webkit-text-stroke:0.3px #1a1a1a;">C</div>
<div class="a" style="left:358px;top:183px;width:1px;height:23px;background:#c4c4c4"></div>
<div class="t " style="left:426.4px;top:187.0px;font-size:17px;color:#1a1a1a;-webkit-text-stroke:0.3px #1a1a1a;">D</div>
<div class="a" style="left:504px;top:183px;width:1px;height:23px;background:#c4c4c4"></div>
<div class="t " style="left:541.5px;top:187.0px;font-size:17px;color:#1a1a1a;-webkit-text-stroke:0.3px #1a1a1a;">E</div>
<div class="a" style="left:587px;top:183px;width:1px;height:23px;background:#c4c4c4"></div>
<div class="t " style="left:622.0px;top:187.0px;font-size:17px;color:#1a1a1a;-webkit-text-stroke:0.3px #1a1a1a;">F</div>
<div class="a" style="left:664px;top:183px;width:1px;height:23px;background:#c4c4c4"></div>
<div class="t " style="left:697.4px;top:187.0px;font-size:17px;color:#1a1a1a;-webkit-text-stroke:0.3px #1a1a1a;">G</div>
<div class="a" style="left:741px;top:183px;width:1px;height:23px;background:#c4c4c4"></div>
<div class="t " style="left:775.4px;top:187.0px;font-size:17px;color:#1a1a1a;-webkit-text-stroke:0.3px #1a1a1a;">H</div>
<div class="a" style="left:819px;top:183px;width:1px;height:23px;background:#c4c4c4"></div>
<div class="t " style="left:856.1px;top:187.0px;font-size:17px;color:#1a1a1a;-webkit-text-stroke:0.3px #1a1a1a;">I</div>
<div class="a" style="left:895px;top:183px;width:1px;height:23px;background:#c4c4c4"></div>
<div class="t " style="left:932.6px;top:187.0px;font-size:17px;color:#1a1a1a;-webkit-text-stroke:0.3px #1a1a1a;">I</div>
<div class="a" style="left:972px;top:183px;width:1px;height:23px;background:#c4c4c4"></div>
<div class="t " style="left:1007.8px;top:187.0px;font-size:17px;color:#1a1a1a;-webkit-text-stroke:0.3px #1a1a1a;">J</div>
<div class="a" style="left:1049px;top:183px;width:1px;height:23px;background:#c4c4c4"></div>
<div class="t " style="left:1083.4px;top:187.0px;font-size:17px;color:#1a1a1a;-webkit-text-stroke:0.3px #1a1a1a;">K</div>
<div class="a" style="left:1126px;top:183px;width:1px;height:23px;background:#c4c4c4"></div>
<div class="t " style="left:1161.3px;top:187.0px;font-size:17px;color:#1a1a1a;-webkit-text-stroke:0.3px #1a1a1a;">L</div>
<div class="a" style="left:1203px;top:183px;width:1px;height:23px;background:#c4c4c4"></div>
<div class="t " style="left:1236.3px;top:187.0px;font-size:17px;color:#1a1a1a;-webkit-text-stroke:0.3px #1a1a1a;">M</div>
<div class="a" style="left:1281px;top:183px;width:1px;height:23px;background:#c4c4c4"></div>
<div class="t " style="left:1313.8px;top:187.0px;font-size:17px;color:#1a1a1a;-webkit-text-stroke:0.3px #1a1a1a;">N</div>
<div class="a" style="left:0;top:205.8px;width:1357px;height:1.2px;background:#9c9c9c"></div>
<div class="a" style="left:0;top:207px;width:30px;height:520px;background:#e6e6e6"></div>
<div class="a" style="left:29.3px;top:185px;width:1.2px;height:542px;background:#9c9c9c"></div>
<div class="a" style="left:30.5px;top:207px;width:1326px;height:520px;background:#fff"></div>
<div class="a" style="left:156px;top:207px;width:1px;height:520px;background:#c8c8c8"></div>
<div class="a" style="left:255px;top:207px;width:1px;height:520px;background:#c8c8c8"></div>
<div class="a" style="left:358px;top:207px;width:1px;height:520px;background:#c8c8c8"></div>
<div class="a" style="left:504px;top:207px;width:1px;height:520px;background:#c8c8c8"></div>
<div class="a" style="left:587px;top:207px;width:1px;height:520px;background:#c8c8c8"></div>
<div class="a" style="left:664px;top:207px;width:1px;height:520px;background:#c8c8c8"></div>
<div class="a" style="left:741px;top:207px;width:1px;height:520px;background:#c8c8c8"></div>
<div class="a" style="left:819px;top:207px;width:1px;height:520px;background:#c8c8c8"></div>
<div class="a" style="left:895px;top:207px;width:1px;height:520px;background:#c8c8c8"></div>
<div class="a" style="left:972px;top:207px;width:1px;height:520px;background:#c8c8c8"></div>
<div class="a" style="left:1049px;top:207px;width:1px;height:520px;background:#c8c8c8"></div>
<div class="a" style="left:1126px;top:207px;width:1px;height:520px;background:#c8c8c8"></div>
<div class="a" style="left:1203px;top:207px;width:1px;height:520px;background:#c8c8c8"></div>
<div class="a" style="left:1281px;top:207px;width:1px;height:520px;background:#c8c8c8"></div>
<div class="a" style="left:1356px;top:207px;width:1px;height:520px;background:#a9a9a9"></div>
<div class="a" style="left:30px;top:236px;width:1326px;height:1px;background:#c8c8c8"></div>
<div class="a" style="left:0;top:235.9px;width:29.5px;height:1px;background:#c8c8c8"></div>
<div class="a" style="left:30px;top:263px;width:1326px;height:1px;background:#c8c8c8"></div>
<div class="a" style="left:0;top:262.5px;width:29.5px;height:1px;background:#c8c8c8"></div>
<div class="a" style="left:30px;top:289px;width:1326px;height:1px;background:#c8c8c8"></div>
<div class="a" style="left:0;top:289.1px;width:29.5px;height:1px;background:#c8c8c8"></div>
<div class="a" style="left:30px;top:316px;width:1326px;height:1px;background:#c8c8c8"></div>
<div class="a" style="left:0;top:316.1px;width:29.5px;height:1px;background:#c8c8c8"></div>
<div class="a" style="left:30px;top:343px;width:1326px;height:1px;background:#c8c8c8"></div>
<div class="a" style="left:0;top:343.1px;width:29.5px;height:1px;background:#c8c8c8"></div>
<div class="a" style="left:30px;top:370px;width:1326px;height:1px;background:#c8c8c8"></div>
<div class="a" style="left:0;top:369.5px;width:29.5px;height:1px;background:#c8c8c8"></div>
<div class="a" style="left:30px;top:396px;width:1326px;height:1px;background:#c8c8c8"></div>
<div class="a" style="left:0;top:396.3px;width:29.5px;height:1px;background:#c8c8c8"></div>
<div class="a" style="left:30px;top:423px;width:1326px;height:1px;background:#c8c8c8"></div>
<div class="a" style="left:0;top:422.8px;width:29.5px;height:1px;background:#c8c8c8"></div>
<div class="a" style="left:30px;top:449px;width:1326px;height:1px;background:#c8c8c8"></div>
<div class="a" style="left:0;top:448.5px;width:29.5px;height:1px;background:#c8c8c8"></div>
<div class="a" style="left:30px;top:474px;width:1326px;height:1px;background:#c8c8c8"></div>
<div class="a" style="left:0;top:474.0px;width:29.5px;height:1px;background:#c8c8c8"></div>
<div class="a" style="left:30px;top:499px;width:1326px;height:1px;background:#c8c8c8"></div>
<div class="a" style="left:0;top:499.3px;width:29.5px;height:1px;background:#c8c8c8"></div>
<div class="a" style="left:30px;top:524px;width:1326px;height:1px;background:#c8c8c8"></div>
<div class="a" style="left:0;top:523.5px;width:29.5px;height:1px;background:#c8c8c8"></div>
<div class="a" style="left:30px;top:547px;width:1326px;height:1px;background:#c8c8c8"></div>
<div class="a" style="left:0;top:547.0px;width:29.5px;height:1px;background:#c8c8c8"></div>
<div class="a" style="left:30px;top:571px;width:1326px;height:1px;background:#c8c8c8"></div>
<div class="a" style="left:0;top:570.8px;width:29.5px;height:1px;background:#c8c8c8"></div>
<div class="a" style="left:30px;top:595px;width:1326px;height:1px;background:#c8c8c8"></div>
<div class="a" style="left:0;top:595.0px;width:29.5px;height:1px;background:#c8c8c8"></div>
<div class="a" style="left:30px;top:619px;width:1326px;height:1px;background:#c8c8c8"></div>
<div class="a" style="left:0;top:618.8px;width:29.5px;height:1px;background:#c8c8c8"></div>
<div class="a" style="left:30px;top:643px;width:1326px;height:1px;background:#c8c8c8"></div>
<div class="a" style="left:0;top:643.1px;width:29.5px;height:1px;background:#c8c8c8"></div>
<div class="a" style="left:30px;top:666px;width:1326px;height:1px;background:#c8c8c8"></div>
<div class="a" style="left:0;top:666.1px;width:29.5px;height:1px;background:#c8c8c8"></div>
<div class="a" style="left:30px;top:690px;width:1326px;height:1px;background:#c8c8c8"></div>
<div class="a" style="left:0;top:690.0px;width:29.5px;height:1px;background:#c8c8c8"></div>
<div class="a" style="left:30px;top:714px;width:1326px;height:1px;background:#c8c8c8"></div>
<div class="a" style="left:0;top:714.0px;width:29.5px;height:1px;background:#c8c8c8"></div>
<div class="t " style="left:10.6px;top:217.0px;font-size:16.5px;color:#1a1a1a;-webkit-text-stroke:0.3px #1a1a1a;">1</div>
<div class="t " style="left:10.6px;top:244.0px;font-size:16.5px;color:#1a1a1a;-webkit-text-stroke:0.3px #1a1a1a;">2</div>
<div class="t " style="left:10.6px;top:271.0px;font-size:16.5px;color:#1a1a1a;-webkit-text-stroke:0.3px #1a1a1a;">3</div>
<div class="t " style="left:10.6px;top:298.0px;font-size:16.5px;color:#1a1a1a;-webkit-text-stroke:0.3px #1a1a1a;">4</div>
<div class="t " style="left:10.6px;top:325.0px;font-size:16.5px;color:#1a1a1a;-webkit-text-stroke:0.3px #1a1a1a;">5</div>
<div class="t " style="left:10.6px;top:351.0px;font-size:16.5px;color:#1a1a1a;-webkit-text-stroke:0.3px #1a1a1a;">6</div>
<div class="t " style="left:10.6px;top:378.0px;font-size:16.5px;color:#1a1a1a;-webkit-text-stroke:0.3px #1a1a1a;">7</div>
<div class="t " style="left:10.6px;top:404.0px;font-size:16.5px;color:#1a1a1a;-webkit-text-stroke:0.3px #1a1a1a;">8</div>
<div class="t " style="left:10.6px;top:430.0px;font-size:16.5px;color:#1a1a1a;-webkit-text-stroke:0.3px #1a1a1a;">9</div>
<div class="t " style="left:6.0px;top:456.0px;font-size:16.5px;color:#1a1a1a;-webkit-text-stroke:0.3px #1a1a1a;">10</div>
<div class="t " style="left:6.6px;top:481.0px;font-size:16.5px;color:#1a1a1a;-webkit-text-stroke:0.3px #1a1a1a;">11</div>
<div class="t " style="left:6.0px;top:505.0px;font-size:16.5px;color:#1a1a1a;-webkit-text-stroke:0.3px #1a1a1a;">12</div>
<div class="t " style="left:6.0px;top:528.0px;font-size:16.5px;color:#1a1a1a;-webkit-text-stroke:0.3px #1a1a1a;">13</div>
<div class="t " style="left:6.0px;top:552.0px;font-size:16.5px;color:#1a1a1a;-webkit-text-stroke:0.3px #1a1a1a;">14</div>
<div class="t " style="left:6.0px;top:576.0px;font-size:16.5px;color:#1a1a1a;-webkit-text-stroke:0.3px #1a1a1a;">15</div>
<div class="t " style="left:6.0px;top:600.0px;font-size:16.5px;color:#1a1a1a;-webkit-text-stroke:0.3px #1a1a1a;">16</div>
<div class="t " style="left:6.0px;top:625.0px;font-size:16.5px;color:#1a1a1a;-webkit-text-stroke:0.3px #1a1a1a;">17</div>
<div class="t " style="left:6.0px;top:648.0px;font-size:16.5px;color:#1a1a1a;-webkit-text-stroke:0.3px #1a1a1a;">18</div>
<div class="t " style="left:6.0px;top:672.0px;font-size:16.5px;color:#1a1a1a;-webkit-text-stroke:0.3px #1a1a1a;">19</div>
<div class="t " style="left:6.0px;top:696.0px;font-size:16.5px;color:#1a1a1a;-webkit-text-stroke:0.3px #1a1a1a;">20</div>
<div class="t " style="left:6.0px;top:720.0px;font-size:16.5px;color:#1a1a1a;-webkit-text-stroke:0.3px #1a1a1a;">21</div>
<div class="a" style="left:30.5px;top:263px;width:557.2px;height:26.6px;background:#4472c4"></div>
<div class="a" style="left:359.5px;top:290.1px;width:145px;height:26.0px;background:#bde9c7"></div>
<div class="a" style="left:359.5px;top:344.1px;width:145px;height:25.4px;background:#bde9c7"></div>
<div class="a" style="left:359.5px;top:370.5px;width:145px;height:25.8px;background:#bde9c7"></div>
<div class="a" style="left:30px;top:263px;width:558px;height:1px;background:#1e1e1e"></div>
<div class="a" style="left:30px;top:289px;width:558px;height:1px;background:#1e1e1e"></div>
<div class="a" style="left:30px;top:316px;width:558px;height:1px;background:#1e1e1e"></div>
<div class="a" style="left:30px;top:343px;width:558px;height:1px;background:#1e1e1e"></div>
<div class="a" style="left:30px;top:370px;width:558px;height:1px;background:#1e1e1e"></div>
<div class="a" style="left:30px;top:396px;width:558px;height:1px;background:#1e1e1e"></div>
<div class="a" style="left:30px;top:423px;width:558px;height:1px;background:#1e1e1e"></div>
<div class="a" style="left:30px;top:263px;width:1px;height:160px;background:#1e1e1e"></div>
<div class="a" style="left:156px;top:263px;width:1px;height:160px;background:#1e1e1e"></div>
<div class="a" style="left:255px;top:263px;width:1px;height:160px;background:#1e1e1e"></div>
<div class="a" style="left:358px;top:263px;width:1px;height:160px;background:#1e1e1e"></div>
<div class="a" style="left:504px;top:263px;width:1px;height:160px;background:#1e1e1e"></div>
<div class="a" style="left:587px;top:263px;width:1px;height:160px;background:#1e1e1e"></div>
<div class="t " style="left:33.7px;top:213.0px;font-size:20.5px;font-weight:700;letter-spacing:-0.11px;transform:scaleX(0.989);transform-origin:0 0;color:#0d0d0d;">Satış Verileri</div>
<div class="t " style="left:34.6px;top:268.0px;font-size:18.2px;font-weight:700;letter-spacing:-0.45px;transform:scaleX(0.956);transform-origin:0 0;color:#ffffff;">Temsilci</div>
<div class="t " style="left:160.8px;top:268.0px;font-size:18.2px;font-weight:700;letter-spacing:-0.83px;transform:scaleX(0.935);transform-origin:0 0;color:#ffffff;">Bölge</div>
<div class="t " style="left:259.7px;top:268.0px;font-size:18.2px;font-weight:700;letter-spacing:-0.39px;transform:scaleX(0.961);transform-origin:0 0;color:#ffffff;">Hedef (TL)</div>
<div class="t " style="left:362.0px;top:268.0px;font-size:18.2px;font-weight:700;letter-spacing:-0.40px;transform:scaleX(0.960);transform-origin:0 0;color:#ffffff;">Gerçekleşen (TL)</div>
<div class="t " style="left:508.3px;top:268.0px;font-size:18.2px;font-weight:700;letter-spacing:-0.34px;transform:scaleX(0.977);transform-origin:0 0;color:#ffffff;">Durum</div>
<div class="t " style="left:33.8px;top:295.0px;font-size:18.8px;letter-spacing:-0.34px;transform:scaleX(0.968);transform-origin:0 0;color:#0d0d0d;">Ahmet Yılmaz</div>
<div class="t " style="left:160.5px;top:295.0px;font-size:18.8px;letter-spacing:-0.12px;transform:scaleX(0.991);transform-origin:0 0;color:#0d0d0d;">Marmara</div>
<div class="t " style="left:300.3px;top:295.0px;font-size:18.8px;letter-spacing:-0.31px;transform:scaleX(0.973);transform-origin:0 0;color:#0d0d0d;">15.000</div>
<div class="t " style="left:445.3px;top:295.0px;font-size:18.8px;letter-spacing:-0.30px;transform:scaleX(0.974);transform-origin:0 0;color:#0d0d0d;">17.500</div>
<div class="t " style="left:508.6px;top:295.0px;font-size:18.8px;letter-spacing:-0.52px;transform:scaleX(0.943);transform-origin:0 0;color:#0d0d0d;">Başarılı</div>
<div class="t " style="left:33.8px;top:322.0px;font-size:18.8px;letter-spacing:-0.37px;transform:scaleX(0.965);transform-origin:0 0;color:#0d0d0d;">Ayşe Demir</div>
<div class="t " style="left:160.5px;top:322.0px;font-size:18.8px;letter-spacing:-1.63px;transform:scaleX(0.903);transform-origin:0 0;color:#0d0d0d;">Ege</div>
<div class="t " style="left:300.3px;top:322.0px;font-size:18.8px;letter-spacing:-0.31px;transform:scaleX(0.973);transform-origin:0 0;color:#0d0d0d;">12.000</div>
<div class="t " style="left:445.3px;top:322.0px;font-size:18.8px;letter-spacing:-0.16px;transform:scaleX(0.986);transform-origin:0 0;color:#0d0d0d;">11.800</div>
<div class="t " style="left:508.6px;top:322.0px;font-size:18.8px;letter-spacing:-0.63px;transform:scaleX(0.935);transform-origin:0 0;color:#0d0d0d;">Başarısız</div>
<div class="t " style="left:33.8px;top:348.0px;font-size:18.8px;letter-spacing:-0.27px;transform:scaleX(0.977);transform-origin:0 0;color:#0d0d0d;">Mehmet Can</div>
<div class="t " style="left:160.5px;top:348.0px;font-size:18.8px;letter-spacing:-0.24px;transform:scaleX(0.975);transform-origin:0 0;color:#0d0d0d;">İç Anadolu</div>
<div class="t " style="left:300.3px;top:348.0px;font-size:18.8px;letter-spacing:-0.31px;transform:scaleX(0.973);transform-origin:0 0;color:#0d0d0d;">20.000</div>
<div class="t " style="left:445.3px;top:348.0px;font-size:18.8px;letter-spacing:-0.30px;transform:scaleX(0.974);transform-origin:0 0;color:#0d0d0d;">22.000</div>
<div class="t " style="left:508.6px;top:348.0px;font-size:18.8px;letter-spacing:-0.52px;transform:scaleX(0.943);transform-origin:0 0;color:#0d0d0d;">Başarılı</div>
<div class="t " style="left:33.8px;top:375.0px;font-size:18.8px;letter-spacing:-0.25px;transform:scaleX(0.977);transform-origin:0 0;color:#0d0d0d;">Zeynep Kaya</div>
<div class="t " style="left:160.5px;top:375.0px;font-size:18.8px;letter-spacing:-0.46px;transform:scaleX(0.959);transform-origin:0 0;color:#0d0d0d;">Akdeniz</div>
<div class="t " style="left:300.3px;top:375.0px;font-size:18.8px;letter-spacing:-0.31px;transform:scaleX(0.973);transform-origin:0 0;color:#0d0d0d;">14.000</div>
<div class="t " style="left:445.3px;top:375.0px;font-size:18.8px;letter-spacing:-0.30px;transform:scaleX(0.974);transform-origin:0 0;color:#0d0d0d;">16.200</div>
<div class="t " style="left:508.6px;top:375.0px;font-size:18.8px;letter-spacing:-0.52px;transform:scaleX(0.943);transform-origin:0 0;color:#0d0d0d;">Başarılı</div>
<div class="t " style="left:33.8px;top:401.0px;font-size:18.8px;letter-spacing:-0.22px;transform:scaleX(0.977);transform-origin:0 0;color:#0d0d0d;">Burak Arslan</div>
<div class="t " style="left:160.5px;top:401.0px;font-size:18.8px;letter-spacing:-0.47px;transform:scaleX(0.956);transform-origin:0 0;color:#0d0d0d;">Karadeniz</div>
<div class="t " style="left:300.3px;top:401.0px;font-size:18.8px;letter-spacing:-0.31px;transform:scaleX(0.973);transform-origin:0 0;color:#0d0d0d;">18.000</div>
<div class="t " style="left:445.3px;top:401.0px;font-size:18.8px;letter-spacing:-0.30px;transform:scaleX(0.974);transform-origin:0 0;color:#0d0d0d;">17.100</div>
<div class="t " style="left:508.6px;top:401.0px;font-size:18.8px;letter-spacing:-0.63px;transform:scaleX(0.935);transform-origin:0 0;color:#0d0d0d;">Başarısız</div>
<div class="a" style="left:1357px;top:183px;width:19px;height:544px;background:#e6e6e6"></div>
<div class="a" style="left:1359.5px;top:199.5px;width:14px;height:467px;background:#fff;border:1px solid #bdbdbd;border-radius:1px"></div>
<div class="a" style="left:1359.5px;top:667px;width:14px;height:45px;background:#d9d9d9"></div>
<div class="a" style="left:1359.5px;top:184.4px;width:14px;height:14px;background:#fff;border:1px solid #bdbdbd"></div>
<svg class="a" style="left:1362px;top:188px" width="9" height="6"><path d="M1 5L4.5 1.5L8 5z" fill="#333"/></svg>
<div class="a" style="left:1359.5px;top:712.5px;width:14px;height:14px;background:#fff;border:1px solid #bdbdbd"></div>
<svg class="a" style="left:1362px;top:717px" width="9" height="6"><path d="M1 1L4.5 4.5L8 1z" fill="#333"/></svg>
<div class="a" style="left:0;top:726px;width:1376px;height:24px;background:#e3e3e3;border-top:1px solid #b9b9b9"></div>
<svg class="a" style="left:20px;top:734px" width="8" height="8"><path d="M6 1L2 4l4 3z" fill="#bdbdbd"/></svg>
<svg class="a" style="left:45px;top:734px" width="8" height="8"><path d="M2 1l4 3l-4 3z" fill="#bdbdbd"/></svg>
<div class="a" style="left:84.4px;top:726px;width:64px;height:21.5px;background:#fff;border-left:1px solid #c8c8c8;border-right:1px solid #c8c8c8"></div>
<div class="a" style="left:84.4px;top:745.5px;width:64px;height:2.2px;background:#217346"></div>
<div class="t " style="left:94.6px;top:730.0px;font-size:13.2px;font-weight:700;letter-spacing:-0.28px;transform:scaleX(0.959);transform-origin:0 0;color:#1f6b3d;">Satuleri</div>
<svg class="a" style="left:175px;top:730px" width="17" height="17" viewBox="0 0 17 17"><circle cx="8.5" cy="8.5" r="7" fill="none" stroke="#666" stroke-width="1"/><path d="M8.5 4.5v8M4.5 8.5h8" stroke="#555" stroke-width="1.3"/></svg>
<div class="a" style="left:820px;top:734px;width:1.6px;height:1.6px;background:#777;border-radius:50%"></div>
<div class="a" style="left:820px;top:738px;width:1.6px;height:1.6px;background:#777;border-radius:50%"></div>
<div class="a" style="left:820px;top:742px;width:1.6px;height:1.6px;background:#777;border-radius:50%"></div>
<div class="a" style="left:834.2px;top:731.3px;width:522.5px;height:14.2px;background:#d6d6d6"></div>
<div class="a" style="left:834.2px;top:731.3px;width:14.5px;height:14.2px;background:#fff;border:1px solid #a0a0a0"></div>
<svg class="a" style="left:837px;top:734px" width="8" height="8"><path d="M6 1L2 4l4 3z" fill="#333"/></svg>
<div class="a" style="left:848px;top:731.3px;width:472.5px;height:14.2px;background:#fff;border:1px solid #a0a0a0"></div>
<div class="a" style="left:1342.5px;top:731.3px;width:14.2px;height:14.2px;background:#fff;border:1px solid #a0a0a0"></div>
<svg class="a" style="left:1345.5px;top:734px" width="8" height="8"><path d="M2 1l4 3l-4 3z" fill="#333"/></svg>
<div class="a" style="left:0;top:749.5px;width:1376px;height:18.5px;background:#efefec;border-top:1px solid #c4c4c4"></div>
<div class="t ns" style="left:6.7px;top:755.0px;font-size:10.6px;letter-spacing:0.08px;color:#555;">Bıqıırt</div>
<div class="a" style="left:1108px;top:750.5px;width:34px;height:17.5px;background:#d3d3d3"></div>
<svg class="a" style="left:1118px;top:753px" width="14" height="14" viewBox="0 0 14 14" fill="none" stroke="#333" stroke-width="1"><rect x="1" y="1" width="12" height="12"/><path d="M5 1v12M9 1v12M1 5h12M1 9h12"/></svg>
<svg class="a" style="left:1152px;top:753px" width="14" height="14" viewBox="0 0 14 14" fill="none" stroke="#444" stroke-width="1"><rect x="1" y="1" width="12" height="12"/><rect x="4.5" y="3.5" width="5" height="7"/></svg>
<svg class="a" style="left:1187px;top:753px" width="14" height="14" viewBox="0 0 14 14" fill="none" stroke="#444" stroke-width="1"><path d="M1 1v12h12V1"/><path d="M4.5 1v4h5V1"/></svg>
<div class="a" style="left:1217.3px;top:759.5px;width:6.7px;height:1.3px;background:#444"></div>
<div class="a" style="left:1229.4px;top:760px;width:89.2px;height:1px;background:#9a9a9a"></div>
<div class="a" style="left:1272.9px;top:755px;width:3.8px;height:10px;background:#555;border-radius:1px"></div>
<div class="a" style="left:1323.6px;top:759.6px;width:8px;height:1.3px;background:#444"></div>
<div class="a" style="left:1327px;top:756px;width:1.3px;height:8px;background:#444"></div>
<div class="t " style="left:1343.0px;top:754.0px;font-size:11.7px;letter-spacing:-0.91px;transform:scaleX(0.909);transform-origin:0 0;color:#333;">100%</div>
<div class="a" style="left:601.7px;top:225.2px;width:369px;height:358.5px;box-shadow:0 2px 10px rgba(0,0,0,.28)"></div>
<div class="a" style="left:601.7px;top:225.2px;width:369px;height:358.5px;background:#efefef;border:1px solid #7a7a7a"></div>
<div class="a" style="left:602.7px;top:226.2px;width:367px;height:26.6px;background:#fff"></div>
<div class="t " style="left:609.5px;top:234.0px;font-size:12.3px;letter-spacing:-0.24px;transform:scaleX(0.959);transform-origin:0 0;color:#1e1e1e;">Yeni Biçimlendirme Kuralı</div>
<div class="t " style="left:904.0px;top:233.0px;font-size:13.2px;font-weight:700;color:#1e1e1e;">?</div>
<svg class="a" style="left:943px;top:233.5px" width="11.5" height="11" viewBox="0 0 11.5 11"><path d="M1 0.5l9.5 10M10.5 0.5l-9.5 10" stroke="#222" stroke-width="1.2"/></svg>
<div class="t " style="left:609.1px;top:263.0px;font-size:12.3px;letter-spacing:-0.46px;transform:scaleX(0.923);transform-origin:0 0;color:#1e1e1e;">Kural Türü Seçin:</div>
<div class="a" style="left:609.5px;top:274px;width:6.5px;height:1px;background:#333"></div>
<div class="a" style="left:608.6px;top:278.3px;width:355.3px;height:115.2px;background:#fff;border:1.6px solid #555"></div>
<div class="a" style="left:611.4px;top:281.2px;width:350.3px;height:17.4px;background:#dedede"></div>
<div class="a" style="left:611.4px;top:317.6px;width:350px;height:1px;background:#f2f2f2"></div>
<div class="a" style="left:611.4px;top:335.5px;width:350px;height:1px;background:#f2f2f2"></div>
<div class="a" style="left:611.4px;top:354.4px;width:350px;height:1px;background:#f2f2f2"></div>
<div class="a" style="left:611.4px;top:373px;width:350px;height:1px;background:#f2f2f2"></div>
<svg class="a" style="left:616.8px;top:287.2px" width="8" height="7" viewBox="0 0 8 7"><path d="M0.5 0.5L7.5 3.5L0.5 6.5z" fill="#111"/></svg>
<div class="t " style="left:627.7px;top:285.0px;font-size:12.5px;letter-spacing:-0.32px;transform:scaleX(0.941);transform-origin:0 0;color:#1e1e1e;">Hücreleri belirleyin</div>
<svg class="a" style="left:616.8px;top:305.5px" width="8" height="7" viewBox="0 0 8 7"><path d="M0.5 0.5L7.5 3.5L0.5 6.5z" fill="#111"/></svg>
<div class="t " style="left:627.7px;top:303.0px;font-size:12.5px;letter-spacing:-0.39px;transform:scaleX(0.930);transform-origin:0 0;color:#1e1e1e;">Formül kopın: severi belirleyin</div>
<svg class="a" style="left:616.8px;top:324.3px" width="8" height="7" viewBox="0 0 8 7"><path d="M0.5 0.5L7.5 3.5L0.5 6.5z" fill="#111"/></svg>
<div class="t " style="left:627.7px;top:322.0px;font-size:12.5px;letter-spacing:-0.28px;transform:scaleX(0.951);transform-origin:0 0;color:#1e1e1e;">Formül enlar ortumunda hücreleri belirleyin</div>
<svg class="a" style="left:616.8px;top:342.6px" width="8" height="7" viewBox="0 0 8 7"><path d="M0.5 0.5L7.5 3.5L0.5 6.5z" fill="#111"/></svg>
<div class="t " style="left:627.7px;top:340.0px;font-size:12.5px;letter-spacing:-0.31px;transform:scaleX(0.943);transform-origin:0 0;color:#1e1e1e;">Formül koyan biçimlendirilecek hücreleri belirleyin</div>
<svg class="a" style="left:616.8px;top:361.3px" width="8" height="7" viewBox="0 0 8 7"><path d="M0.5 0.5L7.5 3.5L0.5 6.5z" fill="#111"/></svg>
<div class="t " style="left:627.7px;top:359.0px;font-size:12.5px;letter-spacing:-0.33px;transform:scaleX(0.940);transform-origin:0 0;color:#1e1e1e;">Formül anızun lilemek hücreleri belirleyin</div>
<svg class="a" style="left:616.8px;top:379.7px" width="8" height="7" viewBox="0 0 8 7"><path d="M0.5 0.5L7.5 3.5L0.5 6.5z" fill="#111"/></svg>
<div class="t " style="left:627.7px;top:377.0px;font-size:12.5px;letter-spacing:-0.31px;transform:scaleX(0.942);transform-origin:0 0;color:#1e1e1e;">Formül kullanarak biçimlendirilecek hücreleri belirleyin</div>
<div class="t " style="left:609.0px;top:409.0px;font-size:12.3px;letter-spacing:-0.44px;transform:scaleX(0.924);transform-origin:0 0;color:#1e1e1e;">Kural Açıklamasını Düzenleyin:</div>
<div class="a" style="left:609.5px;top:420.5px;width:6.5px;height:1px;background:#333"></div>
<div class="a" style="left:608.4px;top:424.6px;width:355.4px;height:125.5px;background:#fff;border:1px solid #9a9a9a"></div>
<div class="t " style="left:616.7px;top:432.0px;font-size:12.7px;font-weight:700;letter-spacing:-0.52px;transform:scaleX(0.919);transform-origin:0 0;color:#111;">Bu formül doğru olduğunda hücreleri biçimlendir:</div>
<div class="a" style="left:616.3px;top:450.3px;width:320px;height:19.2px;background:#fff;border:1px solid #a9a9a9"></div>
<div class="t " style="left:619.6px;top:454.0px;font-size:12.3px;letter-spacing:-0.62px;transform:scaleX(0.930);transform-origin:0 0;color:#111;">=A2>B2</div>
<div class="a" style="left:659.3px;top:453.5px;width:1px;height:13px;background:#111"></div>
<div class="a" style="left:935.9px;top:450.9px;width:18.1px;height:18.7px;background:#e9e9e9;border:1px solid #a9a9a9"></div>
<svg class="a" style="left:939px;top:454px" width="11" height="12" viewBox="0 0 11 12"><path d="M5.5 1.2L1.8 5.2h2.4v3.3h2.6V5.2h2.4z" fill="#111"/><path d="M1.5 10.5h8" stroke="#111" stroke-width="1.4"/></svg>
<div class="a" style="left:609.4px;top:486px;width:353.4px;height:1.4px;background:#dcdcdc"></div>
<div class="t " style="left:616.7px;top:519.0px;font-size:12.7px;font-weight:700;letter-spacing:-0.64px;transform:scaleX(0.916);transform-origin:0 0;color:#111;">Önizleme:</div>
<div class="a" style="left:677px;top:504.2px;width:199.7px;height:39.6px;background:#fff;border:1.5px solid #3d3d3d"></div>
<div class="a" style="left:680.2px;top:507.3px;width:193.4px;height:33.8px;background:#b8e7c5"></div>
<div class="t " style="left:738.8px;top:517.0px;font-size:14.4px;letter-spacing:-0.61px;transform:scaleX(0.935);transform-origin:0 0;color:#1a1a1a;">AaBbCcYyZz</div>
<div class="a" style="left:886.1px;top:513.3px;width:66.9px;height:21px;background:#e1e1e1;border:1px solid #adadad"></div>
<div class="t " style="left:902.8px;top:519.0px;font-size:12.3px;letter-spacing:-0.55px;transform:scaleX(0.905);transform-origin:0 0;color:#111;">Biçim...</div>
<div class="a" style="left:903px;top:530px;width:7px;height:1px;background:#333"></div>
<div class="a" style="left:819.2px;top:554.7px;width:64.7px;height:20.3px;background:#e1e1e1;border:2px solid #2b5f95"></div>
<div class="a" style="left:821.2px;top:556.7px;width:60.7px;height:16.3px;border:1px solid #d5e6f5"></div>
<div class="t " style="left:834.0px;top:560.0px;font-size:12.3px;letter-spacing:-0.69px;transform:scaleX(0.932);transform-origin:0 0;color:#111;">Tamam</div>
<div class="a" style="left:894.5px;top:554.7px;width:64.3px;height:20.3px;background:#e1e1e1;border:1px solid #adadad"></div>
<div class="t " style="left:915.9px;top:560.0px;font-size:12.3px;letter-spacing:-0.31px;transform:scaleX(0.947);transform-origin:0 0;color:#111;">İptal</div>
</body></html>
